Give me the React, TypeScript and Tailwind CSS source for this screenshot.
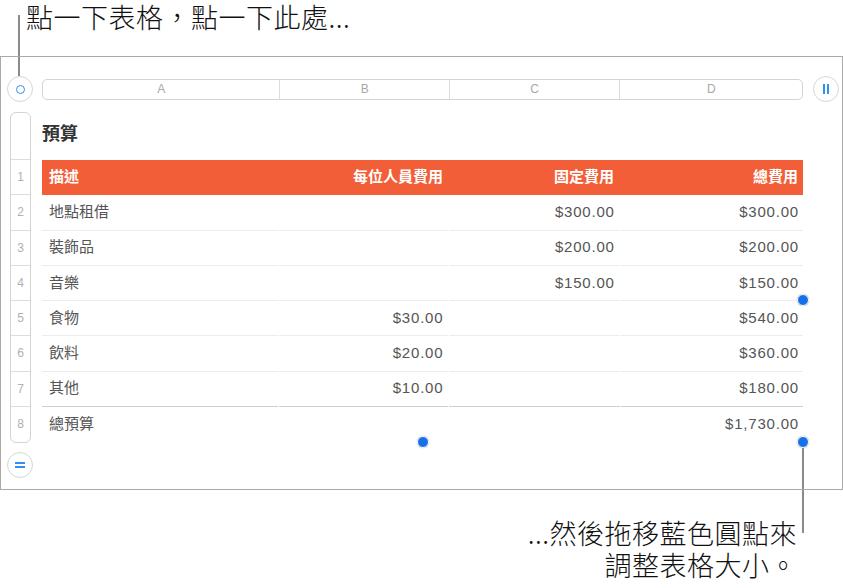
import React from 'react';

type Row = { label: string; per: string; fixed: string; total: string };

const rows: Row[] = [
  { label: '地點租借', per: '', fixed: '$300.00', total: '$300.00' },
  { label: '裝飾品', per: '', fixed: '$200.00', total: '$200.00' },
  { label: '音樂', per: '', fixed: '$150.00', total: '$150.00' },
  { label: '食物', per: '$30.00', fixed: '', total: '$540.00' },
  { label: '飲料', per: '$20.00', fixed: '', total: '$360.00' },
  { label: '其他', per: '$10.00', fixed: '', total: '$180.00' },
  { label: '總預算', per: '', fixed: '', total: '$1,730.00' },
];

const cols = ['A', 'B', 'C', 'D'];
const colWidths = ['w-[237px]', 'w-[170px]', 'w-[171px]', 'w-[183px]'];

const CircleButton = ({ children }: { children: React.ReactNode }) => (
  <div className="w-[26px] h-[26px] rounded-full border border-[#d6d6d6] bg-white flex items-center justify-center shrink-0">
    {children}
  </div>
);

const Handle = ({ className }: { className: string }) => (
  <div
    className={`absolute w-[12px] h-[12px] rounded-full bg-[#1670e8] border-[1.5px] border-white shadow-[0_0_1px_rgba(0,0,0,0.45)] ${className}`}
  />
);

const App = () => {
  const num = 'tracking-[0.8px]';

  return (
    <div className="relative w-[843px] h-[588px] overflow-hidden bg-white font-['Liberation_Sans','Noto_Sans_CJK_TC',sans-serif]">
      {/* callout lines */}
      <div className="absolute left-[18px] top-[15px] w-[2px] h-[61px] bg-[#8a8a8a]" />
      <div className="absolute left-[802px] top-[447px] w-[2px] h-[86px] bg-[#8a8a8a]" />

      <div className="h-[56px] pl-[26px] text-[27px] leading-[33px] tracking-[0.5px] font-light text-[#111] font-['Noto_Sans_CJK_TC',sans-serif]">
        點一下表格，點一下此處...
      </div>

      <div className="relative h-[434px] border border-[#a9a9a9]">
        {/* column header row */}
        <div className="flex items-center mt-[19px]">
          <div className="w-[41px] pl-[6px]">
            <CircleButton>
              <div className="w-[9px] h-[9px] rounded-full border-[1.5px] border-[#2f8ff5]" />
            </CircleButton>
          </div>
          <div className="flex h-[21px] w-[761px] rounded-[5px] border border-[#d4d4d4]">
            {cols.map((c, i) => (
              <div
                key={c}
                className={`${colWidths[i]} ${i > 0 ? 'border-l border-[#dcdcdc]' : ''} flex items-center justify-center text-[12px] text-[#a8a8a8]`}
              >
                {c}
              </div>
            ))}
          </div>
          <div className="pl-[10px]">
            <CircleButton>
              <div className="flex gap-[2.5px]">
                <div className="w-[1.5px] h-[10px] bg-[#2f8ff5]" />
                <div className="w-[1.5px] h-[10px] bg-[#2f8ff5]" />
              </div>
            </CircleButton>
          </div>
        </div>

        {/* body */}
        <div className="flex items-start pt-[10px]">
          <div className="w-[41px] flex flex-col">
            <div className="ml-[9px] w-[21px] rounded-[6px] border border-[#d4d4d4] flex flex-col">
              <div className="h-[47px] border-b border-[#dcdcdc]" />
              {[1, 2, 3, 4, 5, 6, 7, 8].map((n) => (
                <div
                  key={n}
                  className={`h-[35.25px] flex items-center justify-center text-[12px] text-[#b0b0b0] ${n < 8 ? 'border-b border-[#dcdcdc]' : ''}`}
                >
                  {n}
                </div>
              ))}
            </div>
            <div className="mt-[9px] ml-[6px]">
              <CircleButton>
                <div className="flex flex-col gap-[2.5px]">
                  <div className="w-[10px] h-[1.5px] bg-[#2f8ff5]" />
                  <div className="w-[10px] h-[1.5px] bg-[#2f8ff5]" />
                </div>
              </CircleButton>
            </div>
          </div>

          <div className="w-[761px] flex flex-col">
            <div className="h-[48px] flex items-center pb-[3px] text-[18px] font-bold text-[#333]">
              預算
            </div>
            <div className="flex h-[35.25px] bg-[#f15e37] text-white text-[15px] font-bold">
              <div className={`${colWidths[0]} flex items-center pl-[7px]`}>描述</div>
              <div className={`${colWidths[1]} flex items-center justify-end pr-[6px]`}>每位人員費用</div>
              <div className={`${colWidths[2]} flex items-center justify-end pr-[6px]`}>固定費用</div>
              <div className={`${colWidths[3]} flex items-center justify-end pr-[5px]`}>總費用</div>
            </div>
            {rows.map((r, i) => {
              const border =
                i === rows.length - 1
                  ? ''
                  : i === rows.length - 2
                    ? 'border-b border-[#cfcfcf]'
                    : 'border-b border-[#ececec]';
              return (
                <div key={r.label} className="flex h-[35.25px] text-[15px] text-[#555]">
                  <div className={`${colWidths[0]} ${border} flex items-center pl-[7px]`}>{r.label}</div>
                  <div className={`${colWidths[1]} ${border} ml-px flex items-center justify-end pr-[5px] ${num}`}>{r.per}</div>
                  <div className={`${colWidths[2]} ${border} ml-px flex items-center justify-end pr-[5px] ${num}`}>{r.fixed}</div>
                  <div className={`${colWidths[3]} ${border} ml-px flex items-center justify-end pr-[4px] ${num}`}>{r.total}</div>
                </div>
              );
            })}
          </div>
        </div>

        <Handle className="left-[416px] top-[379px]" />
        <Handle className="left-[796px] top-[237px]" />
        <Handle className="left-[796px] top-[379px]" />
      </div>

      <div className="mt-[27px] pr-[46px] text-right text-[27px] leading-[32px] tracking-[0.5px] font-light text-[#111] font-['Noto_Sans_CJK_TC',sans-serif]">
        <div>...然後拖移藍色圓點來</div>
        <div>調整表格大小。</div>
      </div>
    </div>
  );
};

export default App;
